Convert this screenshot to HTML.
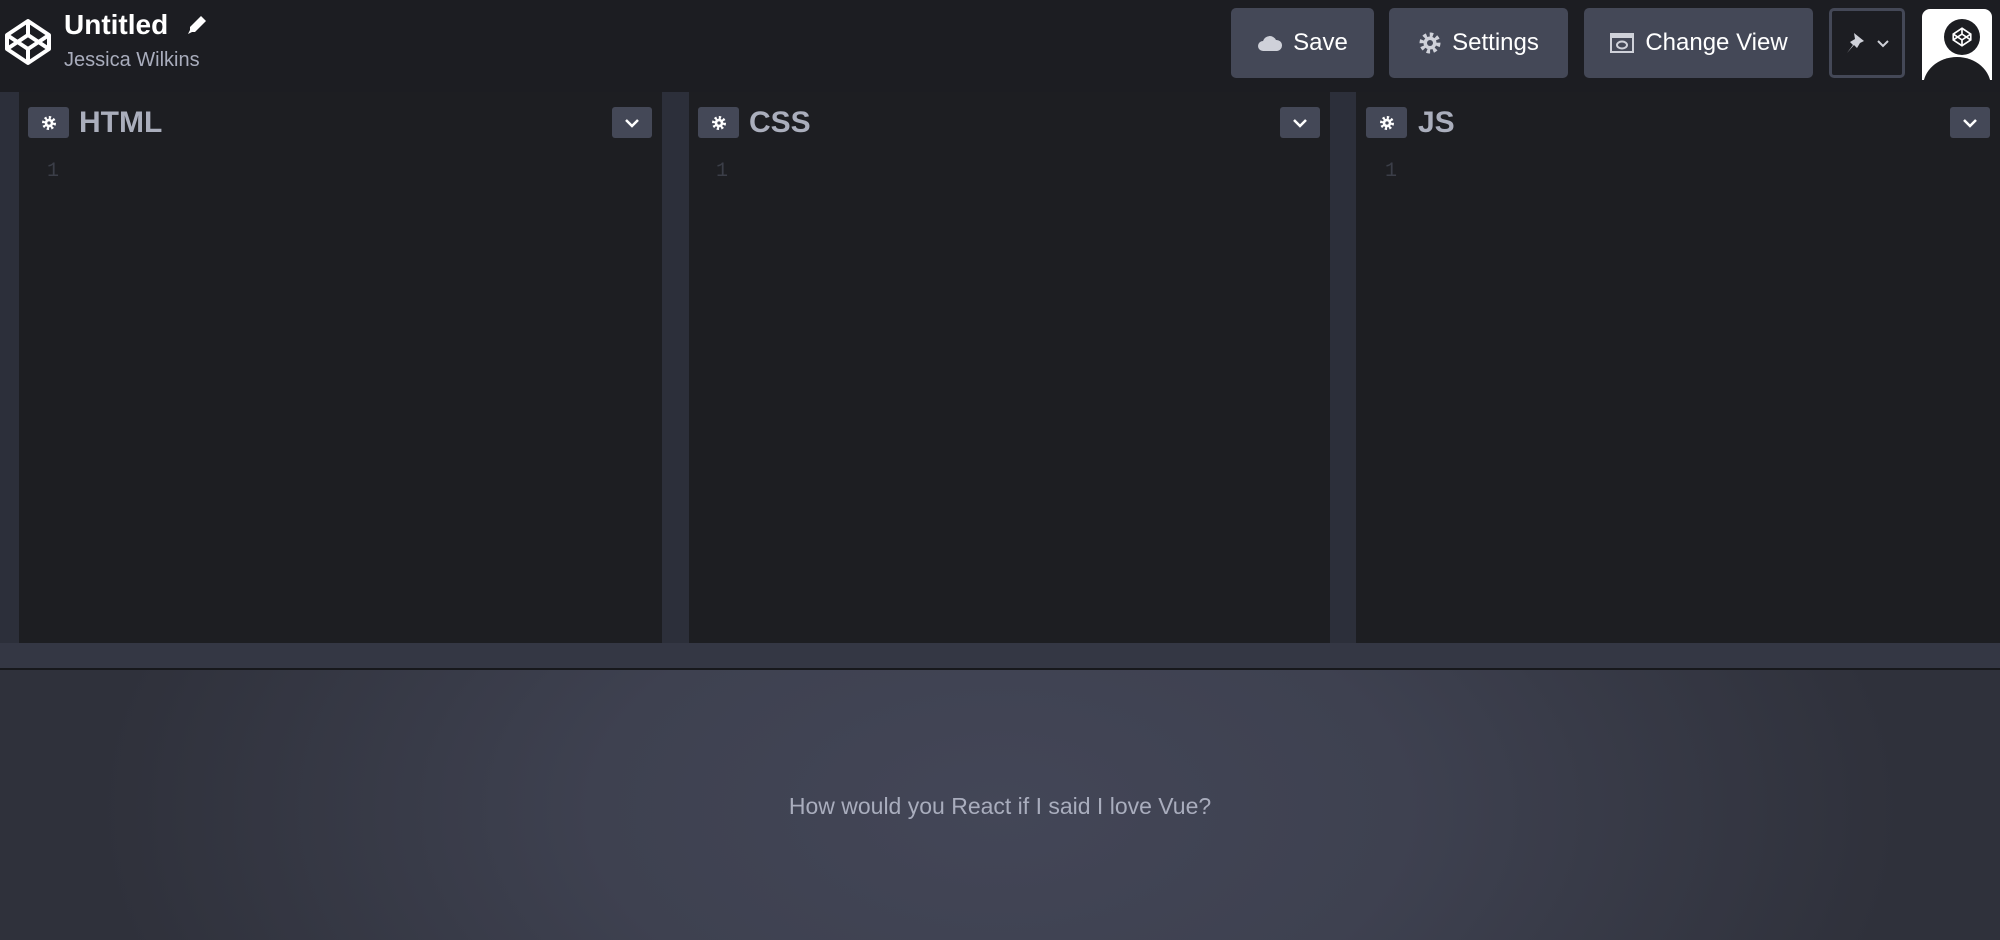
<!DOCTYPE html>
<html><head><meta charset="utf-8"><style>
*{box-sizing:border-box;margin:0;padding:0}
body{width:2000px;height:940px;overflow:hidden;background:#1e1f26;font-family:"Liberation Sans",sans-serif;position:relative}
.hdr{position:absolute;left:0;top:0;width:2000px;height:92px;background:#1c1d22}
.btn{position:absolute;top:8px;height:70px;background:#444857;border-radius:5px;color:#fff;font-size:24px;display:flex;align-items:center;justify-content:center;gap:10px}
.gut{position:absolute;top:92px;height:551px;background:#2c2f3a}
.pan{position:absolute;top:92px;height:551px;background:#1d1e22}
.gear{position:absolute;top:107px;width:41px;height:31px;background:#444857;border-radius:3px;display:flex;align-items:center;justify-content:center}
.ttl{position:absolute;top:106px;font-size:30px;font-weight:bold;color:#aaaebc}
.dd{position:absolute;top:107px;width:40px;height:31px;background:#444857;border-radius:3px;display:flex;align-items:center;justify-content:center}
.ln{position:absolute;top:160px;font-family:"Liberation Mono",monospace;font-size:20px;color:#3b3e48}
</style></head><body>
<div class="hdr"></div>
<svg style="position:absolute;left:4px;top:18px" width="48" height="48" viewBox="0 0 48 48" fill="none" stroke="#fff" stroke-width="4" stroke-linejoin="round"><path d="M24 3L45 17V31L24 45L3 31V17Z"/><path d="M24 3V17M24 31V45M3 17L24 31L45 17M3 31L24 17L45 31"/></svg>
<div style="position:absolute;left:64px;top:9px;font-size:28px;font-weight:bold;color:#fff">Untitled</div>
<svg style="position:absolute;left:186px;top:14px" width="22" height="22" viewBox="0 0 22 22"><path d="M15 2l5 5-11 11H4v-5z" fill="#fff"/><path d="M2 20l2-4 2 2z" fill="#fff"/></svg>
<div style="position:absolute;left:64px;top:49px;font-size:20px;color:#a9adbd">Jessica Wilkins</div>

<div class="btn" style="left:1231px;width:143px"><svg width="26" height="18" viewBox="0 0 26 18"><path d="M6 17a5 5 0 0 1 0-10a7 7 0 0 1 13-1a5 5 0 0 1 1 11z" fill="#cfd1d9"/></svg>Save</div>
<div class="btn" style="left:1389px;width:179px"><svg width="24" height="24" viewBox="0 0 24 24"><circle cx="12" cy="12" r="8" fill="none" stroke="#cfd1d9" stroke-width="5" stroke-dasharray="3.2 3"/><circle cx="12" cy="12" r="6.5" fill="#cfd1d9"/><circle cx="12" cy="12" r="3" fill="#444857"/></svg>Settings</div>
<div class="btn" style="left:1584px;width:229px"><svg width="26" height="22" viewBox="0 0 26 22"><rect x="2" y="2" width="22" height="18" fill="none" stroke="#cfd1d9" stroke-width="2"/><rect x="2" y="2" width="22" height="4" fill="#cfd1d9"/><ellipse cx="13" cy="13" rx="5" ry="3.5" fill="none" stroke="#cfd1d9" stroke-width="2"/></svg>Change View</div>
<div style="position:absolute;left:1829px;top:8px;width:76px;height:70px;border:3px solid #444857;border-radius:5px;display:flex;align-items:center;justify-content:center;gap:10px"><svg width="22" height="24" viewBox="0 0 22 24"><path d="M10 2l10 8-4 2-3 5-3-3-7 8 6-8-3-3 5-3z" fill="#cfd1d9"/></svg><svg width="14" height="9" viewBox="0 0 14 9"><path d="M2 2l5 5 5-5" stroke="#cfd1d9" stroke-width="2" fill="none"/></svg></div>
<div style="position:absolute;left:1922px;top:9px;width:70px;height:71px;background:#fff;border-radius:8px 8px 0 0;overflow:hidden">
<div style="position:absolute;left:22px;top:10px;width:36px;height:36px;border-radius:50%;background:#1d1e22"></div>
<div style="position:absolute;top:48px;width:68px;height:60px;border-radius:50%;background:#1d1e22;left:1px"></div>
<svg style="position:absolute;left:30px;top:18px" width="20" height="20" viewBox="0 0 48 48" fill="none" stroke="#fff" stroke-width="4"><path d="M24 3L45 17V31L24 45L3 31V17Z"/><path d="M24 3V17M24 31V45M3 17L24 31L45 17M3 31L24 17L45 31"/></svg>
</div>

<div class="gut" style="left:0;width:19px"></div>
<div class="pan" style="left:19px;width:643px"></div>
<div class="gut" style="left:662px;width:27px"></div>
<div class="pan" style="left:689px;width:641px"></div>
<div class="gut" style="left:1330px;width:26px"></div>
<div class="pan" style="left:1356px;width:644px"></div>

<div class="gear" style="left:28px"><svg width="16" height="16" viewBox="0 0 24 24"><circle cx="12" cy="12" r="8" fill="none" stroke="#fff" stroke-width="5" stroke-dasharray="3.2 3"/><circle cx="12" cy="12" r="6.5" fill="#fff"/><circle cx="12" cy="12" r="2.5" fill="#444857"/></svg></div>
<div class="ttl" style="left:79px">HTML</div>
<div class="dd" style="left:612px"><svg width="16" height="10" viewBox="0 0 16 10"><path d="M2 2l6 6 6-6" stroke="#fff" stroke-width="2.5" fill="none"/></svg></div>
<div class="ln" style="left:47px">1</div>

<div class="gear" style="left:698px"><svg width="16" height="16" viewBox="0 0 24 24"><circle cx="12" cy="12" r="8" fill="none" stroke="#fff" stroke-width="5" stroke-dasharray="3.2 3"/><circle cx="12" cy="12" r="6.5" fill="#fff"/><circle cx="12" cy="12" r="2.5" fill="#444857"/></svg></div>
<div class="ttl" style="left:749px">CSS</div>
<div class="dd" style="left:1280px"><svg width="16" height="10" viewBox="0 0 16 10"><path d="M2 2l6 6 6-6" stroke="#fff" stroke-width="2.5" fill="none"/></svg></div>
<div class="ln" style="left:716px">1</div>

<div class="gear" style="left:1366px"><svg width="16" height="16" viewBox="0 0 24 24"><circle cx="12" cy="12" r="8" fill="none" stroke="#fff" stroke-width="5" stroke-dasharray="3.2 3"/><circle cx="12" cy="12" r="6.5" fill="#fff"/><circle cx="12" cy="12" r="2.5" fill="#444857"/></svg></div>
<div class="ttl" style="left:1418px">JS</div>
<div class="dd" style="left:1950px"><svg width="16" height="10" viewBox="0 0 16 10"><path d="M2 2l6 6 6-6" stroke="#fff" stroke-width="2.5" fill="none"/></svg></div>
<div class="ln" style="left:1385px">1</div>

<div style="position:absolute;left:0;top:643px;width:2000px;height:25px;background:#343744"></div>
<div style="position:absolute;left:0;top:668px;width:2000px;height:2px;background:#17181c"></div>
<div style="position:absolute;left:0;top:670px;width:2000px;height:270px;background:radial-gradient(ellipse 900px 500px at 1000px 140px,#434657 0%,#3e4150 45%,#2f313b 100%)"></div>
<div style="position:absolute;left:0;top:793px;width:2000px;text-align:center;font-size:23px;color:#a9adbd">How would you React if I said I love Vue?</div>
</body></html>
